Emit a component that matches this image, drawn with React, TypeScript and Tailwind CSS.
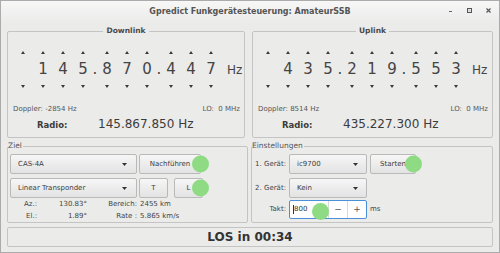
import React from "react";

const downCells = ["", "1", "4", "5", ".", "8", "7", "0", ".", "4", "4", "7"];
const upCells = ["", "4", "3", "5", ".", "2", "1", "9", ".", "5", "5", "3"];

function Tri({ up }: { up?: boolean }) {
  return (
    <svg width="4" height="3" viewBox="0 0 4 3" className="fill-[#3a3a3a]">
      <polygon points={up ? "2,0 4,3 0,3" : "0,0 4,0 2,3"} />
    </svg>
  );
}

function FreqDigits({ cells }: { cells: string[] }) {
  return (
    <div className="flex pl-[5px] text-[#444]">
      {cells.map((c, i) =>
        c === "." ? (
          <div key={i} className="w-[4px] min-w-0 shrink-0 flex flex-col items-center">
            <div className="h-[12px]" />
            <div className="h-[22px] text-[15px] leading-[22px]">.</div>
          </div>
        ) : (
          <div key={i} className="w-[20px] min-w-0 shrink-0 flex flex-col items-center">
            <div className="h-[12px] flex items-center justify-center">
              <Tri up />
            </div>
            <div className="h-[22px] text-[15px] leading-[22px]">{c}</div>
            <div className="h-[12px] flex items-center justify-center">
              <Tri />
            </div>
          </div>
        )
      )}
      <div className="ml-[6px] pt-[13px] text-[12px] leading-[22px] whitespace-nowrap">Hz</div>
    </div>
  );
}

function LinkFrame({
  title,
  cells,
  doppler,
  radio,
  className,
}: {
  title: string;
  cells: string[];
  doppler: string;
  radio: string;
  className: string;
}) {
  return (
    <fieldset className={`${className} min-w-0 border border-[#c4c4c4] rounded-[2px] px-0 pt-[10px] pb-[5px]`}>
      <legend className="mx-auto px-[3px] text-[7.5px] font-bold leading-[10px] text-[#4a4a4a]">
        {title}
      </legend>
      <FreqDigits cells={cells} />
      <div className="mt-[12px] h-[10px] flex items-center justify-between pl-[5px] pr-[4px] text-[7px] text-[#555]">
        <span>{doppler}</span>
        <span>LO:&nbsp; 0 MHz</span>
      </div>
      <div className="mt-[2px] h-[16px] flex items-baseline pl-[29px] text-[#3c3c3c]">
        <span className="w-[61px] text-[8.5px] font-bold">Radio:</span>
        <span className="text-[12px] leading-[16px]">{radio}</span>
      </div>
    </fieldset>
  );
}

function ComboArrow() {
  return (
    <svg width="5" height="3" viewBox="0 0 5 3" className="fill-[#333]">
      <polygon points="0,0 5,0 2.5,3" />
    </svg>
  );
}

function Combo({ label, width, arrowPad }: { label: string; width: string; arrowPad: string }) {
  return (
    <div
      className={`${width} h-full flex items-center justify-between pl-[7px] ${arrowPad} border border-[#b9b9b9] rounded-[2px] bg-gradient-to-b from-[#f6f6f6] to-[#e3e3e3] text-[7px] text-[#3c3c3c]`}
    >
      <span>{label}</span>
      <ComboArrow />
    </div>
  );
}

function Btn({ label, width, dot }: { label: string; width: string; dot?: string }) {
  return (
    <div
      className={`relative ${width} h-full flex items-center justify-center border border-[#b9b9b9] rounded-[2px] bg-gradient-to-b from-[#f6f6f6] to-[#e3e3e3] text-[7px] text-[#3c3c3c]`}
    >
      {label}
      {dot && (
        <span
          className={`absolute ${dot} top-1/2 -translate-y-1/2 w-[17px] h-[17px] rounded-full bg-[#8edb84]`}
        />
      )}
    </div>
  );
}

export default function App() {
  return (
    <div className="w-[500px] h-[253px] flex flex-col border border-[#ababab] bg-[#ebebea] font-['DejaVu_Sans',sans-serif] text-[#3c3c3c]">
      {/* Title bar */}
      <div className="relative h-[22px] flex items-center justify-center bg-gradient-to-b from-[#f7f7f7] to-[#ebebea] text-[8px] font-bold text-[#555]">
        Gpredict Funkgerätesteuerung: AmateurSSB
        <div className="absolute right-[8px] top-[7px] flex items-center gap-[14px]">
          <svg width="5" height="5" viewBox="0 0 5 5">
            <rect x="1" y="3" width="3" height="1" fill="#666" />
          </svg>
          <svg width="5" height="5" viewBox="0 0 5 5">
            <rect x="0.5" y="0.5" width="4" height="4" fill="none" stroke="#555" />
            <rect x="1.5" y="1.5" width="2" height="2" fill="#ccc" />
          </svg>
          <svg width="5" height="5" viewBox="0 0 5 5">
            <path d="M0.5 0.5 L4.5 4.5 M4.5 0.5 L0.5 4.5" stroke="#555" strokeWidth="1.2" />
          </svg>
        </div>
      </div>

      <div className="flex-1 flex flex-col px-[6px] pt-[3px] pb-[5px]">
        {/* Downlink / Uplink */}
        <div className="flex gap-[7px]">
          <LinkFrame
            className="w-[238px] shrink-0"
            title="Downlink"
            cells={downCells}
            doppler="Doppler: -2854 Hz"
            radio="145.867.850 Hz"
          />
          <LinkFrame
            className="flex-1"
            title="Uplink"
            cells={upCells}
            doppler="Doppler: 8514 Hz"
            radio="435.227.300 Hz"
          />
        </div>

        {/* Ziel / Einstellungen */}
        <div className="mt-[3px] flex gap-[3px]">
          <fieldset className="w-[241px] shrink-0 min-w-0 border border-[#c4c4c4] rounded-[2px] px-0 pt-[3px] pb-0">
            <legend className="px-0 pr-[1px] text-[7.5px] leading-[10px] text-[#555]">Ziel</legend>
            <div className="flex flex-col gap-[4px] pl-[2px]">
              <div className="h-[20px] flex gap-[2px]">
                <Combo label="CAS-4A" width="w-[127px]" arrowPad="pr-[9px]" />
                <Btn label="Nachführen" width="w-[62px]" dot="right-[-9px]" />
              </div>
              <div className="h-[20px] flex gap-[2px]">
                <Combo label="Linear Transponder" width="w-[127px]" arrowPad="pr-[9px]" />
                <Btn label="T" width="w-[29px]" />
                <div className="w-[2px]" />
                <Btn label="L" width="w-[29px]" dot="right-[-7px]" />
              </div>
            </div>
            <div className="grid grid-cols-[29px_50px_50px_1fr] text-[7px] text-[#444] leading-[12px]">
              <span className="text-right">Az.:</span>
              <span className="text-right">130.83°</span>
              <span className="text-right">Bereich:</span>
              <span className="pl-[3px]">2455 km</span>
              <span className="text-right">El.:</span>
              <span className="text-right">1.89°</span>
              <span className="text-right">Rate :</span>
              <span className="pl-[3px]">5.865 km/s</span>
            </div>
          </fieldset>

          <fieldset className="flex-1 min-w-0 border border-[#c4c4c4] rounded-[2px] px-0 pt-[3px] pb-[3px]">
            <legend className="px-0 pr-[1px] text-[7.5px] leading-[10px] text-[#555]">Einstellungen</legend>
            <div className="flex flex-col text-[7px] text-[#444]">
              <div className="h-[20px] flex items-center">
                <span className="w-[34px] text-right">1. Gerät:</span>
                <div className="ml-[3px] h-full flex gap-[3px]">
                  <Combo label="ic9700" width="w-[78px]" arrowPad="pr-[8px]" />
                  <Btn label="Starten" width="w-[46px]" dot="right-[-7px]" />
                </div>
              </div>
              <div className="mt-[4px] h-[20px] flex items-center">
                <span className="w-[34px] text-right">2. Gerät:</span>
                <div className="ml-[3px] h-full flex">
                  <Combo label="Kein" width="w-[78px]" arrowPad="pr-[8px]" />
                </div>
              </div>
              <div className="mt-[2px] h-[19px] flex items-center">
                <span className="w-[34px] text-right">Takt:</span>
                <div className="relative ml-[3px] h-full w-[78px] flex border border-[#4a90d9] rounded-[2px] bg-white">
                  <div className="flex-1 flex items-center pl-[3px] text-[7px] text-[#333]">
                    <span className="w-px h-[9px] bg-[#333]" />
                    800
                  </div>
                  <div className="w-[19px] flex items-center justify-center border-l border-[#d8d8d8] text-[9px] text-[#555]">
                    −
                  </div>
                  <div className="w-[19px] flex items-center justify-center border-l border-[#d8d8d8] text-[9px] text-[#555]">
                    +
                  </div>
                  <span className="absolute left-[22px] top-[2px] w-[17px] h-[17px] rounded-full bg-[#8edb84]" />
                </div>
                <span className="ml-[3px]">ms</span>
              </div>
            </div>
          </fieldset>
        </div>

        {/* LOS */}
        <div className="mt-[4px] h-[20px] flex items-center justify-center border border-[#c4c4c4] rounded-[2px] text-[12px] font-bold text-[#333]">
          LOS in 00:34
        </div>
      </div>
    </div>
  );
}
